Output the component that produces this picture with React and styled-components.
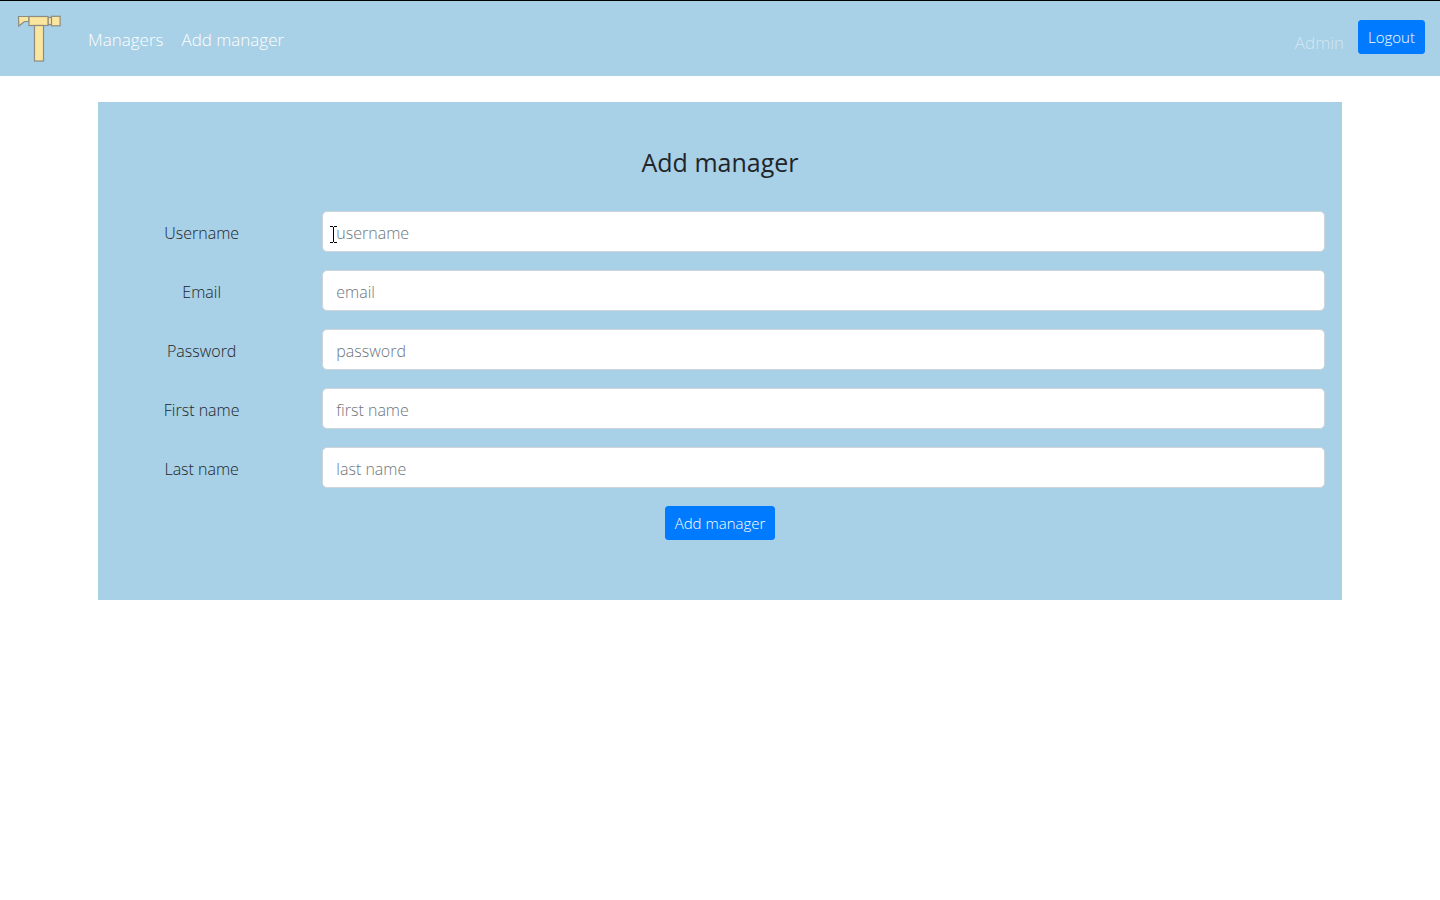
import React from "react";
import styled, { createGlobalStyle } from "styled-components";

const GlobalStyle = createGlobalStyle`
  *, *::before, *::after { box-sizing: border-box; }
  body {
    margin: 0;
    background: #fff;
    color: #212529;
    font-family: "Open Sans", "Noto Sans", sans-serif;
    font-size: 16px;
    font-weight: 300;
    line-height: 24px;
  }
`;

const Navbar = styled.nav`
  display: flex;
  align-items: center;
  justify-content: space-between;
  height: 76px;
  padding: 0 15px 4px 17px;
  border-top: 1px solid #000;
  background: #a8d0e6;
  font-size: 17px;
`;

const NavGroup = styled.div`
  display: flex;
  align-items: center;
  gap: ${(p) => p.$gap}px;
`;

const Brand = styled.a`
  display: block;
  margin-right: 8px;
  padding-top: 2px;
  line-height: 0;
`;

const NavLink = styled.a`
  padding-top: 6px;
  color: #fff;
  text-decoration: none;
`;

const UserName = styled.span`
  padding-top: 12px;
  color: rgba(255, 255, 255, 0.5);
`;

const Button = styled.button`
  height: 34px;
  padding: 0 9px;
  border: 1px solid #007bff;
  border-radius: 3px;
  background: #007bff;
  color: #fff;
  font: inherit;
  font-size: 15px;
  cursor: pointer;
`;

const Card = styled.main`
  width: calc(100% - 32px);
  max-width: 1244px;
  margin: 26px auto 0;
  padding: 42px 0 60px;
  background: #a8d0e6;
`;

const Title = styled.h1`
  margin: 0 0 31px;
  font-size: 25px;
  font-weight: 400;
  line-height: 36px;
  text-align: center;
`;

const Form = styled.form`
  display: flex;
  flex-direction: column;
  align-items: center;
  gap: 18px;
`;

const Row = styled.div`
  display: grid;
  grid-template-columns: 1fr 5fr;
  align-items: center;
  width: 100%;
`;

const Label = styled.label`
  padding-top: 3px;
  text-align: center;
`;

const Field = styled.div`
  position: relative;
  padding: 0 17px;
`;

const Input = styled.input`
  display: block;
  width: 100%;
  height: 41px;
  padding: 2px 13px 0;
  border: 1px solid #ced4da;
  border-radius: 5px;
  background: #fff;
  color: #495057;
  font: inherit;
  &::placeholder { color: #6c757d; opacity: 1; }
`;

const Pointer = styled.svg`
  position: absolute;
  left: 25px;
  top: 15px;
  pointer-events: none;
`;

const Hammer = () => (
  <svg width="45" height="50" viewBox="0 0 45 50" fill="#fae69e" stroke="#8e8b80" strokeWidth="1.2" role="img" aria-label="Home">
    <rect x="31" y="4.5" width="4" height="7" />
    <path d="M1.5 3.5H12V8.5H7.5L1.8 13Z" />
    <rect x="12" y="3.5" width="19" height="9" />
    <rect x="34.5" y="3.3" width="8.6" height="9.5" />
    <rect x="17.5" y="12.5" width="9" height="35.5" />
  </svg>
);

const fields = [
  { id: "username", label: "Username", type: "text", placeholder: "username", pointer: true },
  { id: "email", label: "Email", type: "email", placeholder: "email" },
  { id: "password", label: "Password", type: "password", placeholder: "password" },
  { id: "first-name", label: "First name", type: "text", placeholder: "first name" },
  { id: "last-name", label: "Last name", type: "text", placeholder: "last name" },
];

export default function App() {
  return (
    <>
      <GlobalStyle />
      <Navbar>
        <NavGroup $gap={18}>
          <Brand href="#"><Hammer /></Brand>
          <NavLink href="#managers">Managers</NavLink>
          <NavLink href="#add">Add manager</NavLink>
        </NavGroup>
        <NavGroup $gap={14}>
          <UserName>Admin</UserName>
          <Button type="button">Logout</Button>
        </NavGroup>
      </Navbar>
      <Card>
        <Title>Add manager</Title>
        <Form onSubmit={(e) => e.preventDefault()}>
          {fields.map((f) => (
            <Row key={f.id}>
              <Label htmlFor={f.id}>{f.label}</Label>
              <Field>
                <Input id={f.id} type={f.type} placeholder={f.placeholder} />
                {f.pointer && (
                  <Pointer width="7" height="17" viewBox="0 0 7 17" stroke="#000" fill="none" aria-hidden="true">
                    <path d="M0 .5H3M4 .5H7M3.5 1V16M0 16.5H3M4 16.5H7" />
                  </Pointer>
                )}
              </Field>
            </Row>
          ))}
          <Button type="submit">Add manager</Button>
        </Form>
      </Card>
    </>
  );
}
